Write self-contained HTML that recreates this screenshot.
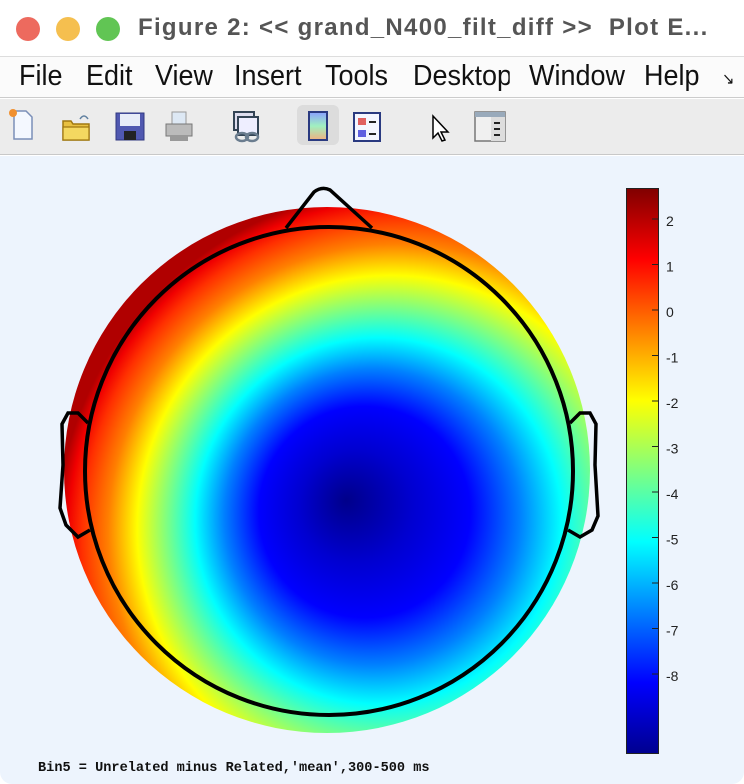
<!DOCTYPE html>
<html><head><meta charset="utf-8"><style>
*{margin:0;padding:0;box-sizing:border-box}
body{width:744px;height:784px;background:#fff;overflow:hidden;font-family:"Liberation Sans",sans-serif;position:relative}
#title{position:absolute;top:0;left:0;width:744px;height:56px;background:#fff}
.dot{position:absolute;top:17px;width:24px;height:24px;border-radius:50%}
#title .t{position:absolute;left:138px;top:14px;font-size:24px;font-weight:bold;color:#555;letter-spacing:1.3px;white-space:nowrap}
#menu{position:absolute;top:56px;left:0;width:744px;height:42px;background:#fbfbfb;border-top:1px solid #ddd;border-bottom:1px solid #ccc}
#menu span{position:absolute;top:2px;font-size:29px;line-height:34px;color:#111;white-space:nowrap;overflow:hidden;transform:scaleX(.93);transform-origin:0 0}
#tool{position:absolute;top:99px;left:0;width:744px;height:56px;background:#ececec;border-bottom:1px solid #c8c8c8}
#plot{position:absolute;top:156px;left:0;width:744px;height:628px;background:#edf4fd;border-radius:0 0 12px 12px}
#cap{position:absolute;left:38px;top:761px;font-family:"Liberation Mono",monospace;font-weight:bold;font-size:13.6px;color:#111;white-space:pre}
</style></head><body>
<div id="title">
<div class="dot" style="left:16px;background:#ed6a5e"></div>
<div class="dot" style="left:56px;background:#f5bf4f"></div>
<div class="dot" style="left:96px;background:#61c554"></div>
<div class="t">Figure 2: &lt;&lt; grand_N400_filt_diff &gt;&gt;&nbsp; Plot E...</div>
</div>
<div id="menu">
<span style="left:19px">File</span>
<span style="left:86px">Edit</span>
<span style="left:155px">View</span>
<span style="left:234px;width:77px">Insert</span>
<span style="left:325px;width:74px">Tools</span>
<span style="left:413px;width:104px">Desktop</span>
<span style="left:529px;width:105px">Window</span>
<span style="left:644px">Help</span>
<span style="left:722px;font-size:16px;top:6px">&#x2198;</span>
</div>
<div id="tool">
<svg width="744" height="56">
<path d="M14 12 h12 l6 6 v22 h-18z" fill="#f4f8ff" stroke="#7b8fb8" stroke-width="1.5"/>
<circle cx="13" cy="14" r="4" fill="#f09030"/>
<path d="M63 22 h8 l2 3 h16 v16 h-26z" fill="#e8c040" stroke="#a07810" stroke-width="1.5"/>
<path d="M63 28 h26 v13 h-26z" fill="#f4d860" stroke="#a07810" stroke-width="1.2"/>
<path d="M80 20 q4 -6 8 0" fill="none" stroke="#6080a0" stroke-width="1.5"/>
<rect x="116" y="14" width="28" height="27" fill="#5058b0" stroke="#303880"/>
<rect x="120" y="15" width="20" height="12" fill="#e8ecf8"/>
<rect x="124" y="32" width="12" height="9" fill="#222"/>
<rect x="172" y="13" width="14" height="12" fill="#dde8f4" stroke="#999"/>
<path d="M166 25 h26 v12 h-26z" fill="#bbb" stroke="#777"/>
<rect x="170" y="36" width="18" height="6" fill="#999"/>
<rect x="234" y="13" width="20" height="18" fill="#dde" stroke="#345" stroke-width="2"/>
<rect x="238" y="18" width="20" height="18" fill="#eef" stroke="#345" stroke-width="2"/>
<ellipse cx="242" cy="38" rx="6" ry="4" fill="none" stroke="#6b7d8f" stroke-width="2.5"/>
<ellipse cx="252" cy="38" rx="6" ry="4" fill="none" stroke="#6b7d8f" stroke-width="2.5"/>
<rect x="297" y="6" width="42" height="40" rx="6" fill="#dcdcdc"/>
<defs><linearGradient id="cb" x1="0" y1="0" x2="0" y2="1"><stop offset="0" stop-color="#8aa0ff"/><stop offset=".5" stop-color="#a0f0c0"/><stop offset="1" stop-color="#f0b080"/></linearGradient></defs>
<rect x="309" y="13" width="18" height="28" fill="url(#cb)" stroke="#2a3a80" stroke-width="2"/>
<rect x="354" y="14" width="26" height="28" fill="#f4f6ff" stroke="#2a3a80" stroke-width="2"/>
<rect x="358" y="19" width="8" height="7" fill="#e06060"/>
<rect x="358" y="31" width="8" height="7" fill="#6060e0"/>
<path d="M369 23h7M369 35h7" stroke="#222" stroke-width="2"/>
<path d="M433 17 v22 l5 -5 l4 8 l3 -1 l-4 -8 h7 z" fill="#fff" stroke="#000" stroke-width="1.5"/>
<rect x="475" y="13" width="30" height="29" fill="#f0f0f0" stroke="#777" stroke-width="1.5"/>
<rect x="475" y="13" width="30" height="5" fill="#9ab"/>
<rect x="491" y="18" width="14" height="24" fill="#ddd"/>
<path d="M494 24h6M494 30h6M494 36h6" stroke="#222" stroke-width="2"/>
</svg>
</div>
<div id="plot"></div>
<svg style="position:absolute;left:0;top:0" width="744" height="784">
<defs>
<radialGradient id="field" gradientUnits="userSpaceOnUse" cx="408" cy="540" r="352" fx="346" fy="500">
<stop offset="0" stop-color="#00008a"/>
<stop offset=".16" stop-color="#0000d0"/>
<stop offset=".3" stop-color="#0000ff"/>
<stop offset=".42" stop-color="#0080ff"/>
<stop offset=".52" stop-color="#00ffff"/>
<stop offset=".62" stop-color="#80ff80"/>
<stop offset=".72" stop-color="#ffff00"/>
<stop offset=".82" stop-color="#ff8000"/>
<stop offset=".91" stop-color="#ff3000"/>
<stop offset=".96" stop-color="#f00000"/>
<stop offset="1" stop-color="#b00000"/>
</radialGradient>
<linearGradient id="jet" x1="0" y1="1" x2="0" y2="0">
<stop offset="0" stop-color="#00008f"/>
<stop offset=".125" stop-color="#0000ff"/>
<stop offset=".375" stop-color="#00ffff"/>
<stop offset=".625" stop-color="#ffff00"/>
<stop offset=".875" stop-color="#ff0000"/>
<stop offset="1" stop-color="#800000"/>
</linearGradient>
</defs>
<circle cx="327" cy="470" r="263" fill="url(#field)"/>
<circle cx="329" cy="471" r="244" fill="none" stroke="#000" stroke-width="4"/>
<path d="M286 228 L314 192 Q322 186 330 190 L372 228" fill="none" stroke="#000" stroke-width="3.5"/>
<path d="M88 423 L78 413 L68 413 L62 424 L63 465 L60 508 L66 525 L78 537 L90 530" fill="none" stroke="#000" stroke-width="3.5"/>
<path d="M570 423 L580 413 L590 413 L596 424 L595 465 L598 516 L592 530 L580 537 L568 530" fill="none" stroke="#000" stroke-width="3.5"/>
<rect x="626.5" y="188.5" width="32" height="565" fill="url(#jet)" stroke="#222" stroke-width="1"/>
<g stroke="#222" stroke-width="1">
<path d="M652 219h6M652 264.5h6M652 310h6M652 355.5h6M652 401h6M652 446.5h6M652 492h6M652 537.5h6M652 583h6M652 628.5h6M652 674h6"/>
</g>
<g font-family="Liberation Sans, sans-serif" font-size="14" fill="#222">
<text x="666" y="226">2</text>
<text x="666" y="271.5">1</text>
<text x="666" y="317">0</text>
<text x="666" y="362.5">-1</text>
<text x="666" y="408">-2</text>
<text x="666" y="453.5">-3</text>
<text x="666" y="499">-4</text>
<text x="666" y="544.5">-5</text>
<text x="666" y="590">-6</text>
<text x="666" y="635.5">-7</text>
<text x="666" y="681">-8</text>
</g>
</svg>
<div id="cap">Bin5 = Unrelated minus Related,'mean',300-500 ms</div>
</body></html>
